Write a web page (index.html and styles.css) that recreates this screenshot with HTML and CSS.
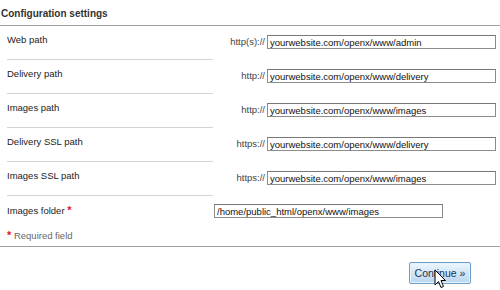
FILE: index.html
```html
<!DOCTYPE html>
<html>
<head>
<meta charset="utf-8">
<link rel="stylesheet" href="styles.css">
</head>
<body>
<div class="page">
  <h2 class="title">Configuration settings</h2>
  <div class="row">
    <div class="label">Web path</div>
    <div class="field"><span class="prefix">http(s)://</span><input class="text" type="text" value="yourwebsite.com/openx/www/admin"></div>
  </div>
  <div class="row">
    <div class="label">Delivery path</div>
    <div class="field"><span class="prefix">http://</span><input class="text" type="text" value="yourwebsite.com/openx/www/delivery"></div>
  </div>
  <div class="row">
    <div class="label">Images path</div>
    <div class="field"><span class="prefix">http://</span><input class="text" type="text" value="yourwebsite.com/openx/www/images"></div>
  </div>
  <div class="row">
    <div class="label">Delivery SSL path</div>
    <div class="field"><span class="prefix">https://</span><input class="text" type="text" value="yourwebsite.com/openx/www/delivery"></div>
  </div>
  <div class="row">
    <div class="label">Images SSL path</div>
    <div class="field"><span class="prefix">https://</span><input class="text" type="text" value="yourwebsite.com/openx/www/images"></div>
  </div>
  <div class="row row-last">
    <div class="label">Images folder <span class="req-star">*</span></div>
    <div class="field field-left"><input class="text" type="text" value="/home/public_html/openx/www/images"></div>
  </div>
  <div class="required"><span class="req-star">*</span> Required field</div>
  <div class="actions">
    <div class="btn-wrap">
      <button class="btn" type="button">Continue »</button>
      <svg class="cursor" width="13" height="20" viewBox="0 0 13 20"><path d="M1 1 L1 16 L4.5 12.5 L7 18.5 L9.5 17.5 L7 11.5 L11.5 11.5 Z" fill="#fff" stroke="#000" stroke-width="1" stroke-linejoin="miter"/></svg>
    </div>
  </div>
</div>
</body>
</html>
```
FILE: styles.css
```css
* { box-sizing: border-box; }
html, body { margin: 0; padding: 0; background: #fff; }
body {
  font-family: "Liberation Sans", Arial, sans-serif;
  font-size: 9.5px;
  color: #333;
  width: 500px;
  height: 290px;
  overflow: hidden;
}
.page { width: 500px; }
.title {
  margin: 0;
  font-size: 10px;
  font-weight: bold;
  color: #333;
  height: 26px;
  padding: 8px 0 0 1px;
  line-height: 12px;
  border-bottom: 1px solid #a0a0a0;
}
.row {
  display: flex;
  padding-left: 7px;
  height: 34px;
}
.label {
  width: 206px;
  height: 34px;
  border-bottom: 1px solid #d4d4d4;
  padding-top: 8px;
  line-height: 12px;
  color: #222;
}
.row-last { height: 30px; }
.row-last .label { border-bottom: none; height: 30px; padding-top: 8px; }
.field {
  flex: 1;
  display: flex;
  justify-content: flex-end;
  align-items: flex-start;
  padding-top: 9px;
  padding-right: 4px;
}
.field-left { justify-content: flex-start; padding-left: 1px; padding-top: 8px; }
.prefix {
  color: #444;
  line-height: 14px;
  margin-right: 2px;
}
.text {
  width: 229px;
  height: 14px;
  margin: 0;
  padding: 0 2px;
  border: 1px solid #8c8c8c;
  border-top-color: #777;
  font-family: "Liberation Sans", Arial, sans-serif;
  font-size: 9.5px;
  color: #111;
  background: #fff;
  line-height: 12px;
}
.req-star { color: #e8141b; font-weight: bold; font-size: 11px; }
.required {
  height: 21px;
  padding: 3px 0 0 7px;
  line-height: 12px;
  color: #666;
  border-bottom: 1px solid #a0a0a0;
}
.actions {
  display: flex;
  justify-content: flex-end;
  padding: 15px 29px 0 0;
}
.btn-wrap { position: relative; }
.btn {
  width: 62px;
  height: 22px;
  margin: 0;
  padding: 0 0 1px;
  border: 1px solid #6d9ccb;
  border-radius: 2px;
  background: linear-gradient(#eef6fd, #cfe4f6 55%, #b9d7f0);
  font-family: "Liberation Sans", Arial, sans-serif;
  font-size: 10.5px;
  color: #1b3350;
  box-shadow: inset 0 0 0 1px #e8f3fc;
}
.cursor {
  position: absolute;
  left: 25px;
  top: 7px;
}
```
